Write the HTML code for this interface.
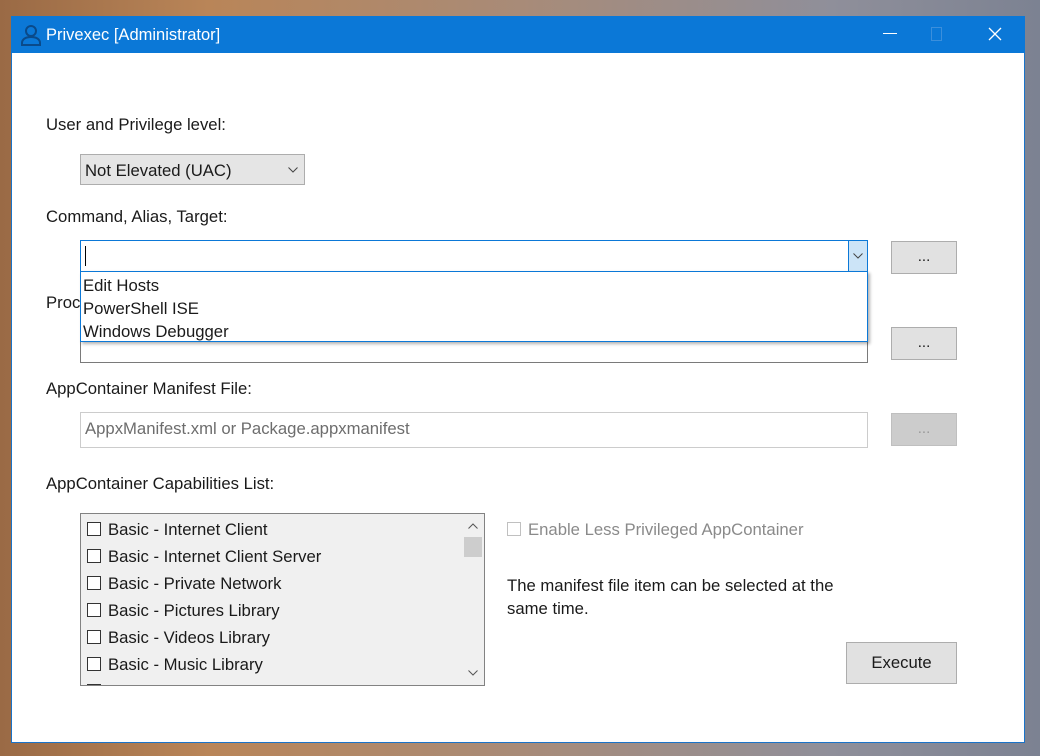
<!DOCTYPE html>
<html><head><meta charset="utf-8"><style>
*{box-sizing:border-box;margin:0;padding:0}
body{width:1040px;height:756px;overflow:hidden;position:relative;font-family:"Liberation Sans",sans-serif;font-size:16.7px;color:#1a1a1a;
background:linear-gradient(90deg,#9a6a45 0%,#b98558 20%,#a88b78 50%,#8f8f9a 80%,#7c8292 100%)}
.a{position:absolute}
.win{left:11px;top:16px;width:1014px;height:727px;background:#fff;border:1px solid #1a73c8}
.title{left:11px;top:16px;width:1014px;height:37px;background:#0b78d7;color:#fff;font-size:16.5px}
.lbl{font-size:16.7px;color:#1a1a1a;white-space:nowrap}
.btn{background:#e1e1e1;border:1px solid #adadad;text-align:center;font-size:15px}
.cb{width:14px;height:14px;border:1px solid #333;display:inline-block;margin-right:7px;vertical-align:-1px;background:#fff}
.li{height:27px;line-height:27px;white-space:nowrap}
</style></head><body>
<div class="a win"></div>
<div class="a title">
 <svg class="a" style="left:9px;top:8px" width="22" height="22" viewBox="0 0 22 22"><circle cx="11" cy="7" r="5" fill="none" stroke="#0a4a8a" stroke-width="2"/><path d="M2 21v-2c0-4 4-6 9-6s9 2 9 6v2z" fill="none" stroke="#0a4a8a" stroke-width="2"/></svg>
 <div class="a" style="left:35px;top:10px">Privexec [Administrator]</div>
 <div class="a" style="left:872px;top:17px;width:14px;height:1px;background:#fff"></div>
 <div class="a" style="left:920px;top:11px;width:11px;height:14px;border:1px solid #3b8fdc"></div>
 <svg class="a" style="left:977px;top:11px" width="14" height="14"><path d="M1 1L13 13M13 1L1 13" stroke="#fff" stroke-width="1.3"/></svg>
</div>

<div class="a lbl" style="left:46px;top:115px">User and Privilege level:</div>
<div class="a" style="left:80px;top:154px;width:225px;height:31px;background:#e5e5e5;border:1px solid #adadad">
 <div class="a" style="left:4px;top:6px">Not Elevated (UAC)</div>
 <svg class="a" style="left:207px;top:12px" width="10" height="6"><path d="M0.5 0.5L5 5L9.5 0.5" fill="none" stroke="#444"/></svg>
</div>

<div class="a lbl" style="left:46px;top:207px">Command, Alias, Target:</div>
<div class="a lbl" style="left:46px;top:293px">Proc</div>
<div class="a" style="left:80px;top:330px;width:788px;height:33px;border:1px solid #7a7a7a;background:#fff"></div>
<div class="a" style="left:80px;top:240px;width:788px;height:32px;border:1px solid #0b78d7;background:#fff">
 <div class="a" style="left:4px;top:5px;width:1px;height:20px;background:#000"></div>
 <div class="a" style="left:767px;top:0;width:19px;height:30px;background:#cce4f7;border-left:1px solid #0b78d7">
 <svg class="a" style="left:4px;top:12px" width="10" height="6"><path d="M0.5 0.5L5 5L9.5 0.5" fill="none" stroke="#444"/></svg></div>
</div>
<div class="a" style="left:80px;top:271px;width:788px;height:71px;border:1px solid #0b78d7;background:#fff;box-shadow:2px 2px 3px rgba(0,0,0,.3)">
 <div class="a" style="left:2px;top:4px">Edit Hosts</div>
 <div class="a" style="left:2px;top:27px">PowerShell ISE</div>
 <div class="a" style="left:2px;top:50px">Windows Debugger</div>
</div>
<div class="a btn" style="left:891px;top:241px;width:66px;height:33px;line-height:30px">...</div>
<div class="a btn" style="left:891px;top:327px;width:66px;height:33px;line-height:30px">...</div>

<div class="a lbl" style="left:46px;top:379px">AppContainer Manifest File:</div>
<div class="a" style="left:80px;top:412px;width:788px;height:36px;border:1px solid #ccc;background:#fff">
 <div class="a" style="left:4px;top:6px;color:#6d6d6d">AppxManifest.xml or Package.appxmanifest</div></div>
<div class="a btn" style="left:891px;top:413px;width:66px;height:33px;line-height:30px;background:#ccc;border-color:#bfbfbf;color:#999">...</div>

<div class="a lbl" style="left:46px;top:474px">AppContainer Capabilities List:</div>
<div class="a" style="left:80px;top:513px;width:405px;height:173px;border:1px solid #828282;background:#f0f0f0;overflow:hidden">
 <div class="a" style="left:6px;top:2px">
  <div class="li"><span class="cb"></span>Basic - Internet Client</div>
  <div class="li"><span class="cb"></span>Basic - Internet Client Server</div>
  <div class="li"><span class="cb"></span>Basic - Private Network</div>
  <div class="li"><span class="cb"></span>Basic - Pictures Library</div>
  <div class="li"><span class="cb"></span>Basic - Videos Library</div>
  <div class="li"><span class="cb"></span>Basic - Music Library</div>
  <div class="li"><span class="cb"></span></div>
 </div>
 <div class="a" style="left:382px;top:0;width:21px;height:171px;background:#f0f0f0"></div>
 <svg class="a" style="left:387px;top:9px" width="10" height="6"><path d="M0.5 5.5L5 1L9.5 5.5" fill="none" stroke="#555"/></svg>
 <div class="a" style="left:383px;top:23px;width:18px;height:20px;background:#cdcdcd"></div>
 <svg class="a" style="left:387px;top:156px" width="10" height="6"><path d="M0.5 0.5L5 5L9.5 0.5" fill="none" stroke="#555"/></svg>
</div>

<div class="a lbl" style="left:507px;top:520px;color:#8a8a8a"><span class="cb" style="border-color:#c0c0c0"></span>Enable Less Privileged AppContainer</div>
<div class="a lbl" style="left:507px;top:574px;line-height:23px">The manifest file item can be selected at the<br>same time.</div>
<div class="a btn" style="left:846px;top:642px;width:111px;height:42px;line-height:40px;font-size:16.7px">Execute</div>
</body></html>
